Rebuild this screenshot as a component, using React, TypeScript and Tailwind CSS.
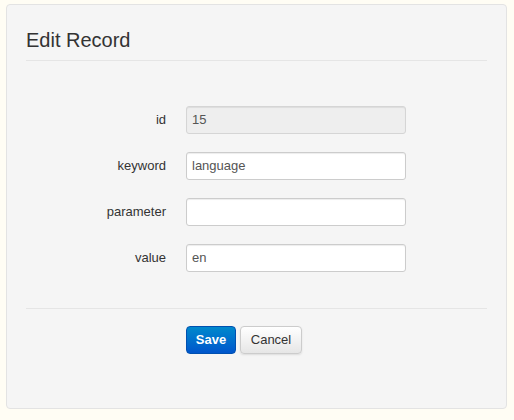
export default function App() {
  const rows = [
    { l: "id", v: "15", d: true },
    { l: "keyword", v: "language" },
    { l: "parameter", v: "" },
    { l: "value", v: "en" },
  ];
  return (
    <div className="w-[514px] h-[420px] bg-[#fffdf4] pt-[4px] pl-[6px]" style={{ fontFamily: '"Liberation Sans", Arial, sans-serif' }}>
      <div className="w-[501px] h-[405px] bg-[#f5f5f5] border border-[#e3e3e3] rounded-[4px] px-[19px]">
        <div className="pt-[23px] pb-[8px] border-b border-[#e5e5e5] text-[20px] text-[#333] leading-[24px]">Edit Record</div>
        <div className="pt-[45px] flex flex-col gap-[18px]">
          {rows.map((r) => (
            <div key={r.l} className="flex items-center">
              <div className="w-[140px] text-right text-[13px] text-[#333] pr-[0px]">{r.l}</div>
              <div className={`ml-[20px] w-[220px] h-[28px] rounded-[3px] border px-[5px] flex items-center text-[13px] text-[#555] ${r.d ? "bg-[#eeeeee] border-[#d5d5d5]" : "bg-white border-[#cccccc]"} shadow-[inset_0_1px_1px_rgba(0,0,0,0.075)]`}>{r.v}</div>
            </div>
          ))}
        </div>
        <div className="mt-[36px] border-t border-[#e5e5e5]" />
        <div className="mt-[17px] ml-[160px] flex gap-[4px]">
          <div className="w-[50px] h-[28px] rounded-[4px] bg-gradient-to-b from-[#0088cc] to-[#0055cc] border border-[#0050b0] text-white text-[13px] font-bold flex items-center justify-center">Save</div>
          <div className="w-[62px] h-[28px] rounded-[4px] bg-gradient-to-b from-white to-[#e6e6e6] border border-[#cccccc] text-[#333] text-[13px] flex items-center justify-center shadow-[0_1px_2px_rgba(0,0,0,0.1)]">Cancel</div>
        </div>
      </div>
    </div>
  );
}
